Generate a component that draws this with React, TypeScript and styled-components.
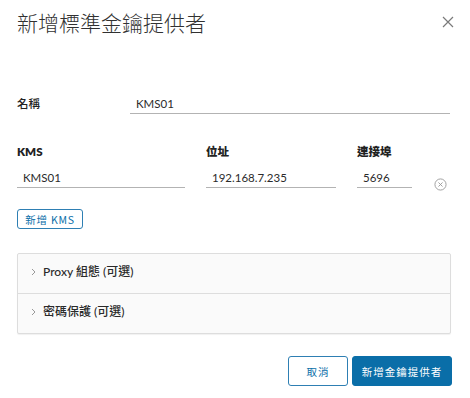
import React from "react";
import styled, { createGlobalStyle } from "styled-components";

const GlobalStyle = createGlobalStyle`
  html, body {
    margin: 0;
    padding: 0;
    background: #ffffff;
  }
  body {
    font-family: Lato, "Noto Sans CJK TC", sans-serif;
    color: #333333;
  }
`;

const Dialog = styled.div`
  width: 470px;
  height: 398px;
  box-sizing: border-box;
  padding: 10px 18px 0 17px;
  display: flex;
  flex-direction: column;
`;

const Header = styled.div`
  display: flex;
  align-items: center;
  justify-content: space-between;
  height: 24px;
`;

const Title = styled.h1`
  margin: 0;
  font-family: "Noto Sans CJK TC", sans-serif;
  font-size: 21px;
  font-weight: 300;
  line-height: 24px;
  color: #313131;
`;

const CloseButton = styled.button`
  border: none;
  background: none;
  padding: 0;
  margin-right: -3px;
  width: 14px;
  height: 14px;
  display: flex;
  align-items: center;
  justify-content: center;
  cursor: pointer;
`;

const NameRow = styled.div`
  display: grid;
  grid-template-columns: 113px 320px;
  align-items: start;
  margin-top: 62px;
`;

const Label = styled.label<{ $bold?: boolean }>`
  font-family: Lato, "Noto Sans CJK TC", sans-serif;
  font-size: 11.5px;
  font-weight: ${(p) => (p.$bold ? 800 : 500)};
  color: #222222;
  line-height: 16px;
`;

const Input = styled.input<{ $width: number }>`
  width: ${(p) => p.$width}px;
  box-sizing: border-box;
  border: none;
  border-bottom: 1.5px solid #b3b3b3;
  outline: none;
  font-family: Lato, sans-serif;
  font-size: 11.5px;
  color: #2b2b2b;
  padding: 0 0 2px 6px;
  height: 18px;
  background: transparent;
`;

const KmsGrid = styled.div`
  display: grid;
  grid-template-columns: 168px 130px 55px 1fr;
  column-gap: 21px;
  row-gap: 10px;
  margin-top: 30px;
  align-items: end;
`;

const ClearIcon = styled.button`
  border: none;
  background: none;
  padding: 0;
  margin-left: 1px;
  width: 14px;
  height: 14px;
  align-self: end;
  margin-bottom: -4px;
  display: flex;
`;

const OutlineButton = styled.button<{ $big?: boolean }>`
  font-family: "Noto Sans CJK TC", Lato, sans-serif;
  font-size: 10.5px;
  letter-spacing: ${(p) => (p.$big ? "1px" : "0.8px")};
  color: #0a6ea8;
  background: #ffffff;
  border: 1px solid #2e7fb3;
  border-radius: 3px;
  height: ${(p) => (p.$big ? "30px" : "20px")};
  width: ${(p) => (p.$big ? "60px" : "66px")};
  padding: 0;
  cursor: pointer;
`;

const AddRow = styled.div`
  margin-top: 21px;
  display: flex;
`;

const Panel = styled.div`
  margin-top: 24px;
  width: 432px;
  border: 1px solid #dddddd;
  border-radius: 2px;
  background: #fafafa;
  box-shadow: 0 1px 1px rgba(0, 0, 0, 0.06);
`;

const PanelRow = styled.div<{ $last?: boolean }>`
  height: ${(p) => (p.$last ? "39px" : "40px")};
  display: flex;
  align-items: flex-start;
  padding: 10px 0 0 13px;
  box-sizing: border-box;
  gap: 7px;
  border-bottom: ${(p) => (p.$last ? "none" : "1px solid #dddddd")};
`;

const Chevron = styled.span`
  display: flex;
  padding-top: 4px;
`;

const PanelTitle = styled.span`
  font-family: Lato, "Noto Sans CJK TC", sans-serif;
  font-size: 12px;
  font-weight: 500;
  color: #2a2a2a;
  line-height: 16px;
`;

const Footer = styled.div`
  display: flex;
  justify-content: flex-end;
  gap: 4px;
  margin-top: 22px;
`;

const PrimaryButton = styled.button`
  font-family: "Noto Sans CJK TC", sans-serif;
  font-size: 10.5px;
  letter-spacing: 1px;
  color: #ffffff;
  background: #0a6ea8;
  border: 1px solid #0a6ea8;
  border-radius: 3px;
  height: 30px;
  width: 100px;
  padding: 0;
  cursor: pointer;
`;

const App: React.FC = () => {
  return (
    <>
      <GlobalStyle />
      <Dialog>
        <Header>
          <Title>新增標準金鑰提供者</Title>
          <CloseButton aria-label="close">
            <svg width="12" height="12" viewBox="0 0 12 12">
              <path d="M1 1 L11 11 M11 1 L1 11" stroke="#7a7a7a" strokeWidth="1.2" />
            </svg>
          </CloseButton>
        </Header>

        <NameRow>
          <Label>名稱</Label>
          <Input $width={320} defaultValue="KMS01" />
        </NameRow>

        <KmsGrid>
          <Label $bold>KMS</Label>
          <Label $bold>位址</Label>
          <Label $bold>連接埠</Label>
          <span />
          <Input $width={168} defaultValue="KMS01" />
          <Input $width={130} defaultValue="192.168.7.235" />
          <Input $width={55} defaultValue="5696" />
          <ClearIcon aria-label="remove">
            <svg width="13" height="13" viewBox="0 0 14 14">
              <circle cx="7" cy="7" r="6" fill="none" stroke="#9a9a9a" strokeWidth="1" />
              <path d="M4.8 4.8 L9.2 9.2 M9.2 4.8 L4.8 9.2" stroke="#9a9a9a" strokeWidth="1" />
            </svg>
          </ClearIcon>
        </KmsGrid>

        <AddRow>
          <OutlineButton>新增 KMS</OutlineButton>
        </AddRow>

        <Panel>
          <PanelRow>
            <Chevron>
              <svg width="5" height="8" viewBox="0 0 5 8">
                <path d="M1 1 L4 4 L1 7" fill="none" stroke="#999999" strokeWidth="1" />
              </svg>
            </Chevron>
            <PanelTitle>Proxy 組態 (可選)</PanelTitle>
          </PanelRow>
          <PanelRow $last>
            <Chevron>
              <svg width="5" height="8" viewBox="0 0 5 8">
                <path d="M1 1 L4 4 L1 7" fill="none" stroke="#999999" strokeWidth="1" />
              </svg>
            </Chevron>
            <PanelTitle>密碼保護 (可選)</PanelTitle>
          </PanelRow>
        </Panel>

        <Footer>
          <OutlineButton $big>取消</OutlineButton>
          <PrimaryButton>新增金鑰提供者</PrimaryButton>
        </Footer>
      </Dialog>
    </>
  );
};

export default App;
